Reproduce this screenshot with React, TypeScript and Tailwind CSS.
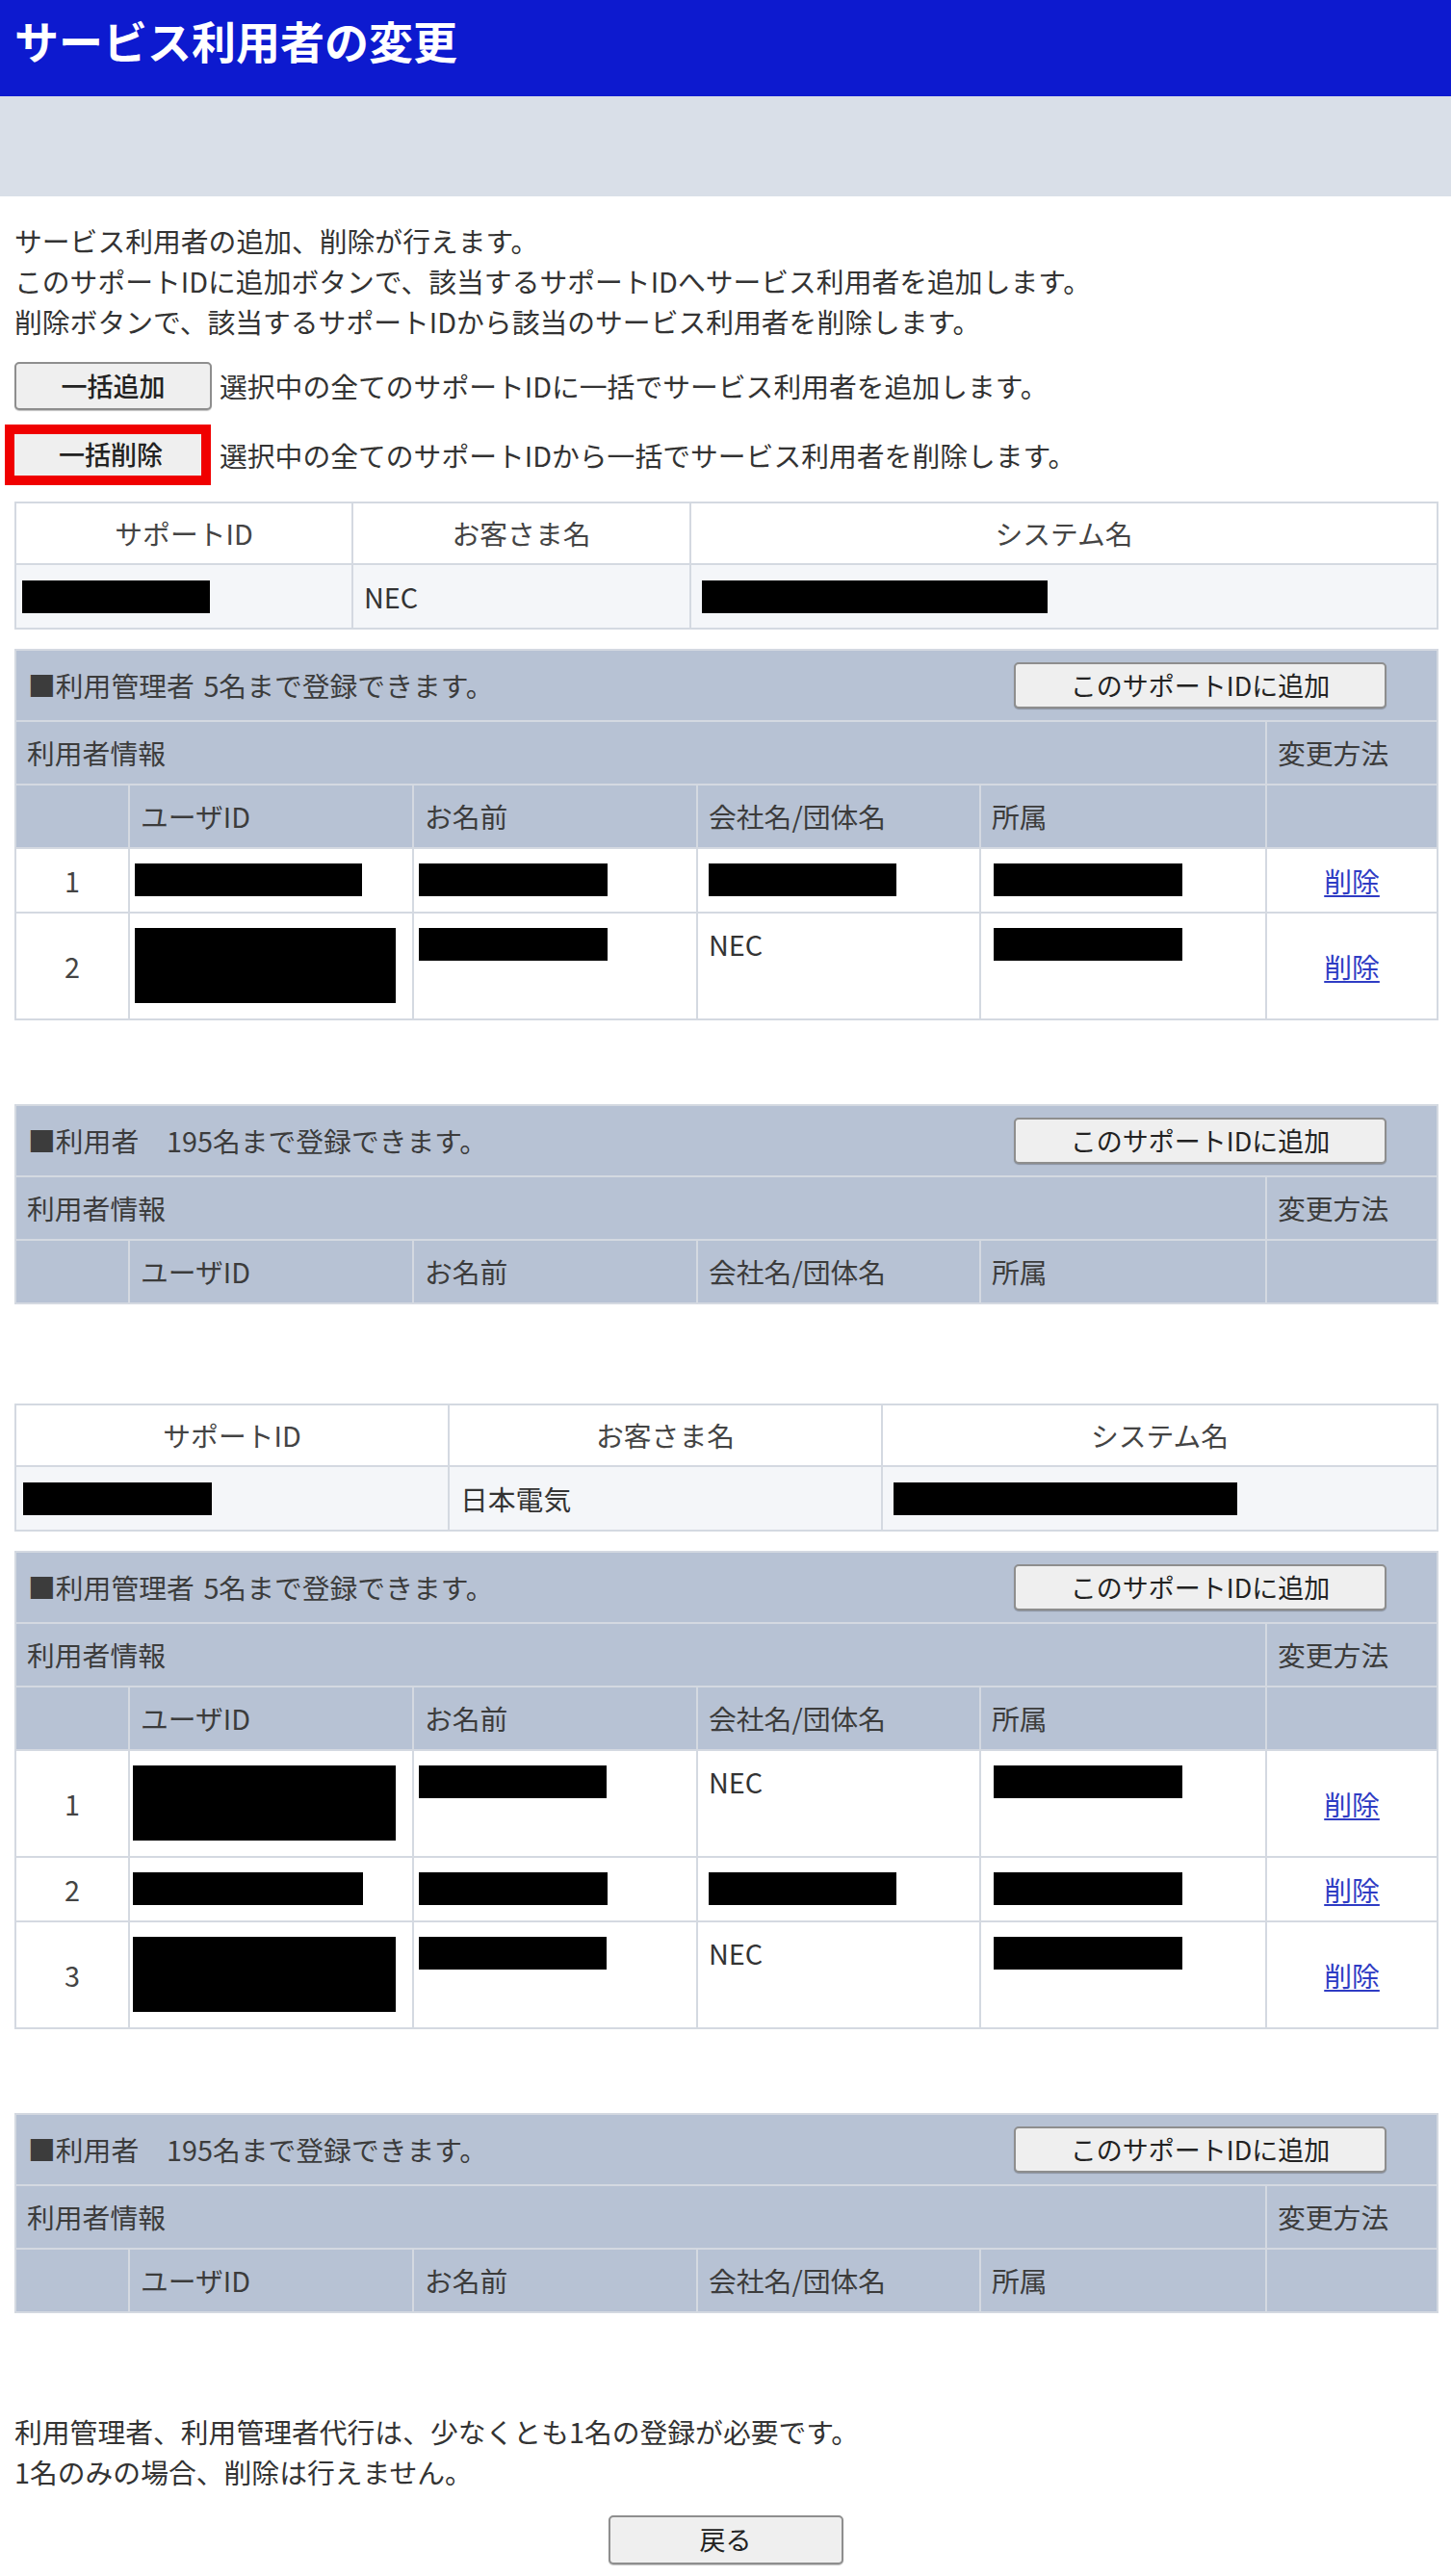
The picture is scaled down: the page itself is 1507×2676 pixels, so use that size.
import React from "react";

// redacted values are drawn as black boxes, like the reference
type Val = string | { box: string };

interface Member {
  no: number;
  userId: Val;
  name: Val;
  company: Val;
  dept: Val;
}

interface SupportGroup {
  widths: [string, string, string];
  idBox: string;
  customer: string;
  systemBox: string;
  admins: Member[];
}

const GROUPS: SupportGroup[] = [
  {
    widths: ["w-[350px]", "w-[351px]", "w-[776px]"],
    idBox: "w-[195px] h-[34px] -ml-[5px]",
    customer: "NEC",
    systemBox: "w-[359px] h-[34px]",
    admins: [
      {
        no: 1,
        userId: { box: "w-[236px] h-[34px] -ml-[6px]" },
        name: { box: "w-[196px] h-[34px] -ml-[6px]" },
        company: { box: "w-[195px] h-[34px]" },
        dept: { box: "w-[196px] h-[34px] ml-[2px]" },
      },
      {
        no: 2,
        userId: { box: "w-[271px] h-[78px] -ml-[6px]" },
        name: { box: "w-[196px] h-[34px] -ml-[6px]" },
        company: "NEC",
        dept: { box: "w-[196px] h-[34px] ml-[2px]" },
      },
    ],
  },
  {
    widths: ["w-[450px]", "w-[450px]", "w-[577px]"],
    idBox: "w-[196px] h-[34px] -ml-[4px]",
    customer: "日本電気",
    systemBox: "w-[357px] h-[34px]",
    admins: [
      {
        no: 1,
        userId: { box: "w-[273px] h-[78px] -ml-[8px]" },
        name: { box: "w-[195px] h-[34px] -ml-[6px]" },
        company: "NEC",
        dept: { box: "w-[196px] h-[34px] ml-[2px]" },
      },
      {
        no: 2,
        userId: { box: "w-[239px] h-[34px] -ml-[8px]" },
        name: { box: "w-[196px] h-[34px] -ml-[6px]" },
        company: { box: "w-[195px] h-[34px]" },
        dept: { box: "w-[196px] h-[34px] ml-[2px]" },
      },
      {
        no: 3,
        userId: { box: "w-[273px] h-[78px] -ml-[8px]" },
        name: { box: "w-[195px] h-[34px] -ml-[6px]" },
        company: "NEC",
        dept: { box: "w-[196px] h-[34px] ml-[2px]" },
      },
    ],
  },
];

const cellBorder = "border-2 border-[#d4d9e1]";

function Value({ v }: { v: Val }) {
  if (typeof v === "string") return <span>{v}</span>;
  return <div className={`bg-black ${v.box}`} />;
}

function GrayButton({
  children,
  className,
}: {
  children: React.ReactNode;
  className: string;
}) {
  return (
    <button
      className={`flex items-center justify-center bg-[#efefef] border-2 border-[#8e8e8e] rounded-[5px] text-[27px] text-[#222] shadow-[0_1px_1px_rgba(0,0,0,0.25)] ${className}`}
    >
      {children}
    </button>
  );
}

function SupportTable({ group }: { group: SupportGroup }) {
  return (
    <table className="w-full table-fixed border-collapse">
      <colgroup>
        <col className={group.widths[0]} />
        <col className={group.widths[1]} />
        <col className={group.widths[2]} />
      </colgroup>
      <thead>
        <tr className="bg-white text-[#444]">
          {["サポートID", "お客さま名", "システム名"].map((h) => (
            <th
              key={h}
              className={`${cellBorder} py-[12px] leading-[38px] font-normal text-center`}
            >
              {h}
            </th>
          ))}
        </tr>
      </thead>
      <tbody>
        <tr className="bg-[#f4f6f9]">
          <td className={`${cellBorder} px-[11px] pt-[16px] pb-[15px] leading-[34px]`}>
            <div className={`bg-black ${group.idBox}`} />
          </td>
          <td className={`${cellBorder} px-[11px] pt-[16px] pb-[15px] leading-[34px]`}>
            {group.customer}
          </td>
          <td className={`${cellBorder} px-[11px] pt-[16px] pb-[15px] leading-[34px]`}>
            <div className={`bg-black ${group.systemBox}`} />
          </td>
        </tr>
      </tbody>
    </table>
  );
}

function MemberTable({ title, members }: { title: string; members: Member[] }) {
  const head = `${cellBorder} px-[11px] py-[12px] leading-[40px] font-normal text-left`;
  const data = `${cellBorder} px-[11px] pt-[15px] pb-[16px] leading-[34px] align-top`;
  return (
    <table className="w-full table-fixed border-collapse">
      <colgroup>
        <col className="w-[118px]" />
        <col className="w-[295px]" />
        <col className="w-[295px]" />
        <col className="w-[294px]" />
        <col className="w-[297px]" />
        <col className="w-[178px]" />
      </colgroup>
      <thead className="bg-[#b7c2d4] text-[#3c3c3c]">
        <tr>
          <th colSpan={6} className={`${cellBorder} pl-[12px] pr-[52px] py-[12px] font-normal text-left`}>
            <div className="flex items-center justify-between">
              <span className="leading-[40px] whitespace-pre">{title}</span>
              <GrayButton className="w-[387px] h-[48px]">このサポートIDに追加</GrayButton>
            </div>
          </th>
        </tr>
        <tr>
          <th colSpan={5} className={head}>
            利用者情報
          </th>
          <th className={head}>変更方法</th>
        </tr>
        <tr>
          <th className={head}></th>
          <th className={head}>ユーザID</th>
          <th className={head}>お名前</th>
          <th className={head}>会社名/団体名</th>
          <th className={head}>所属</th>
          <th className={head}></th>
        </tr>
      </thead>
      <tbody className="bg-white">
        {members.map((m) => (
          <tr key={m.no}>
            <td className={`${cellBorder} text-center align-middle text-[#444]`}>{m.no}</td>
            <td className={data}>
              <Value v={m.userId} />
            </td>
            <td className={data}>
              <Value v={m.name} />
            </td>
            <td className={data}>
              <Value v={m.company} />
            </td>
            <td className={data}>
              <Value v={m.dept} />
            </td>
            <td className={`${cellBorder} text-center align-middle`}>
              <a href="#" className="text-[#2f3cc4] underline underline-offset-[3px]">
                削除
              </a>
            </td>
          </tr>
        ))}
      </tbody>
    </table>
  );
}

export default function App() {
  return (
    <div className="w-[1507px] min-h-[2676px] bg-white text-[#333] text-[28.8px] font-['Noto_Sans_CJK_JP','Noto_Sans',sans-serif]">
      {/* Header */}
      <header className="h-[100px] bg-[#0d1acf] pl-[15px] pt-[15px]">
        <h1 className="text-[46px] leading-[52px] font-bold text-white">サービス利用者の変更</h1>
      </header>
      <div className="h-[104px] bg-[#d9dfe8]" />

      <main className="px-[15px] pb-[13px]">
        <div className="mt-[25px] leading-[42px]">
          <p>サービス利用者の追加、削除が行えます。</p>
          <p>このサポートIDに追加ボタンで、該当するサポートIDへサービス利用者を追加します。</p>
          <p>削除ボタンで、該当するサポートIDから該当のサービス利用者を削除します。</p>
        </div>

        <div className="mt-[21px] flex items-center gap-[8px]">
          <GrayButton className="w-[205px] h-[50px] font-medium">一括追加</GrayButton>
          <span>選択中の全てのサポートIDに一括でサービス利用者を追加します。</span>
        </div>
        <div className="mt-[15px] -ml-[10px] flex items-center gap-[9px]">
          <button className="w-[214px] h-[63px] flex items-center justify-center bg-[#efefef] border-[10px] border-[#f00000] text-[27px] font-medium text-[#222] pl-[6px]">
            一括削除
          </button>
          <span>選択中の全てのサポートIDから一括でサービス利用者を削除します。</span>
        </div>

        {GROUPS.map((g, i) => (
          <section key={i} className={i === 0 ? "mt-[17px]" : "mt-[103px]"}>
            <SupportTable group={g} />
            <div className="mt-[20px]">
              <MemberTable title={"■利用管理者\u20045名まで登録できます。"} members={g.admins} />
            </div>
            <div className="mt-[87px]">
              <MemberTable title="■利用者　195名まで登録できます。" members={[]} />
            </div>
          </section>
        ))}

        <div className="mt-[102px] leading-[42px]">
          <p>利用管理者、利用管理者代行は、少なくとも1名の登録が必要です。</p>
          <p>1名のみの場合、削除は行えません。</p>
        </div>
        <div className="mt-[24px] flex justify-center">
          <GrayButton className="w-[244px] h-[51px]">戻る</GrayButton>
        </div>
      </main>
    </div>
  );
}
